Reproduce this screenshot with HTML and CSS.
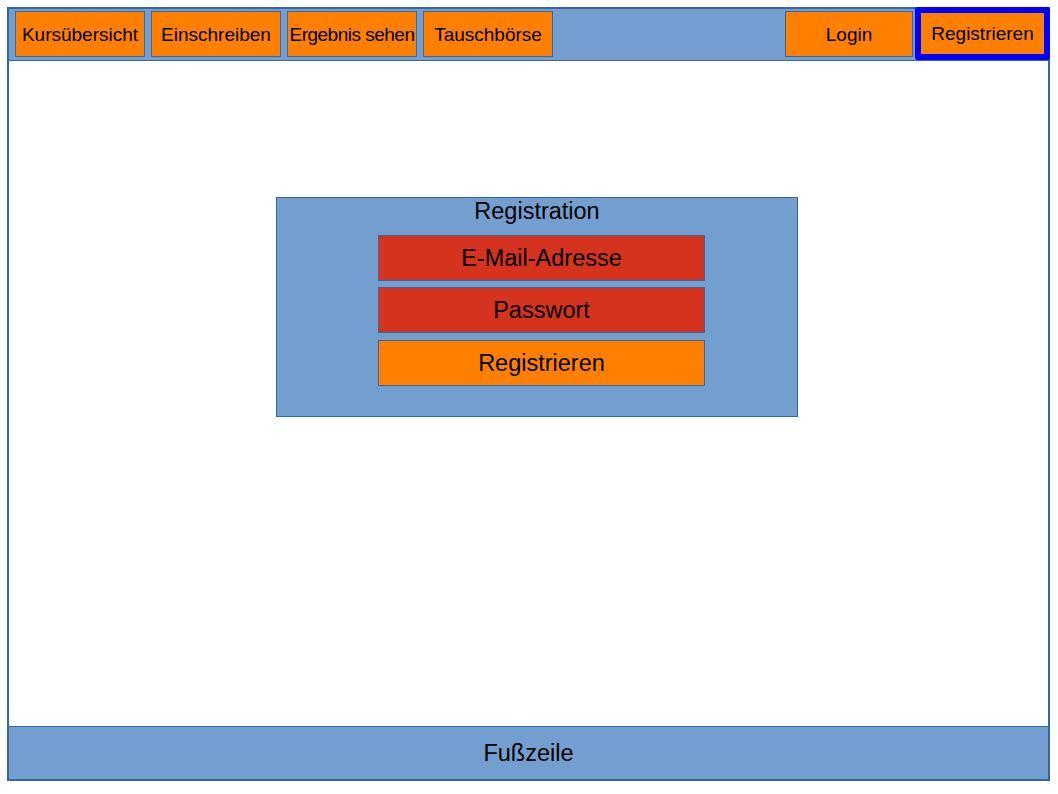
FILE: index.html
```html
<!DOCTYPE html>
<html lang="de">
<head>
  <meta charset="UTF-8">
  <meta name="viewport" content="width=device-width, initial-scale=1.0">
  <title>Registrierung</title>
  <link rel="stylesheet" href="styles.css">
</head>
<body>
  <div class="frame">
    <header class="topbar">
      <a class="nav-btn" href="#">Kursübersicht</a>
      <a class="nav-btn" href="#">Einschreiben</a>
      <a class="nav-btn nav-tight" href="#">Ergebnis sehen</a>
      <a class="nav-btn" href="#">Tauschbörse</a>

      <a class="nav-btn login" href="#">Login</a>
      <a class="nav-btn register active" href="#">Registrieren</a>
    </header>

    <main class="content">
      <div class="form-box">
        <div class="form-title">Registration</div>
        <div class="field red">E-Mail-Adresse</div>
        <div class="field red">Passwort</div>
        <div class="field orange submit">Registrieren</div>
      </div>
    </main>

    <footer class="footer">Fußzeile</footer>
  </div>
</body>
</html>
```

FILE: styles.css
```css
:root {
  --blue: #729fcf;
  --line: #3465a4;
  --orange: #ff8000;
  --red: #d5331e;
  --active: #0000ff;
}

body {
  margin: 7px;
  font-family: "Liberation Sans", Arial, sans-serif;
  color: #000;
  background: #fff;
}

.frame {
  width: 1043px;
  height: 774px;
  box-sizing: border-box;
  border: 2px solid var(--line);
  display: flex;
  flex-direction: column;
}

.topbar {
  height: 52px;
  box-sizing: border-box;
  background: var(--blue);
  border-bottom: 1px solid var(--line);
  display: flex;
  align-items: flex-start;
  padding: 2px 0 0 6px;
  gap: 6px;
}

.nav-btn {
  width: 130px;
  height: 46px;
  box-sizing: border-box;
  padding-top: 1px;
  background: var(--orange);
  border: 1px solid var(--line);
  color: #000;
  text-decoration: none;
  font-size: 19px;
  display: flex;
  align-items: center;
  justify-content: center;
  white-space: nowrap;
}

.nav-tight {
  letter-spacing: -0.5px;
}

.login {
  width: 128px;
  margin-left: auto;
}

.register {
  width: 135px;
  height: 53px;
  margin: -4px -2px 0 -4px;
}

.active {
  border: 6px solid var(--active);
  border-radius: 3px;
}

.content {
  flex: 1;
  background: #fff;
  padding: 136px 0 0 267px;
}

.form-box {
  width: 522px;
  height: 220px;
  box-sizing: border-box;
  background: var(--blue);
  border: 1px solid var(--line);
}

.form-title {
  font-size: 23.5px;
  line-height: 26px;
  text-align: center;
  margin-bottom: 11px;
}

.field {
  width: 327px;
  height: 46px;
  box-sizing: border-box;
  margin: 0 0 6px 101px;
  padding-top: 1px;
  border: 1px solid var(--line);
  font-size: 23.5px;
  display: flex;
  align-items: center;
  justify-content: center;
}

.red {
  background: var(--red);
}

.orange {
  background: var(--orange);
}

.submit {
  margin-top: 7px;
}

.footer {
  height: 53px;
  box-sizing: border-box;
  background: var(--blue);
  border-top: 1px solid var(--line);
  font-size: 23.5px;
  display: flex;
  align-items: center;
  justify-content: center;
}
```
